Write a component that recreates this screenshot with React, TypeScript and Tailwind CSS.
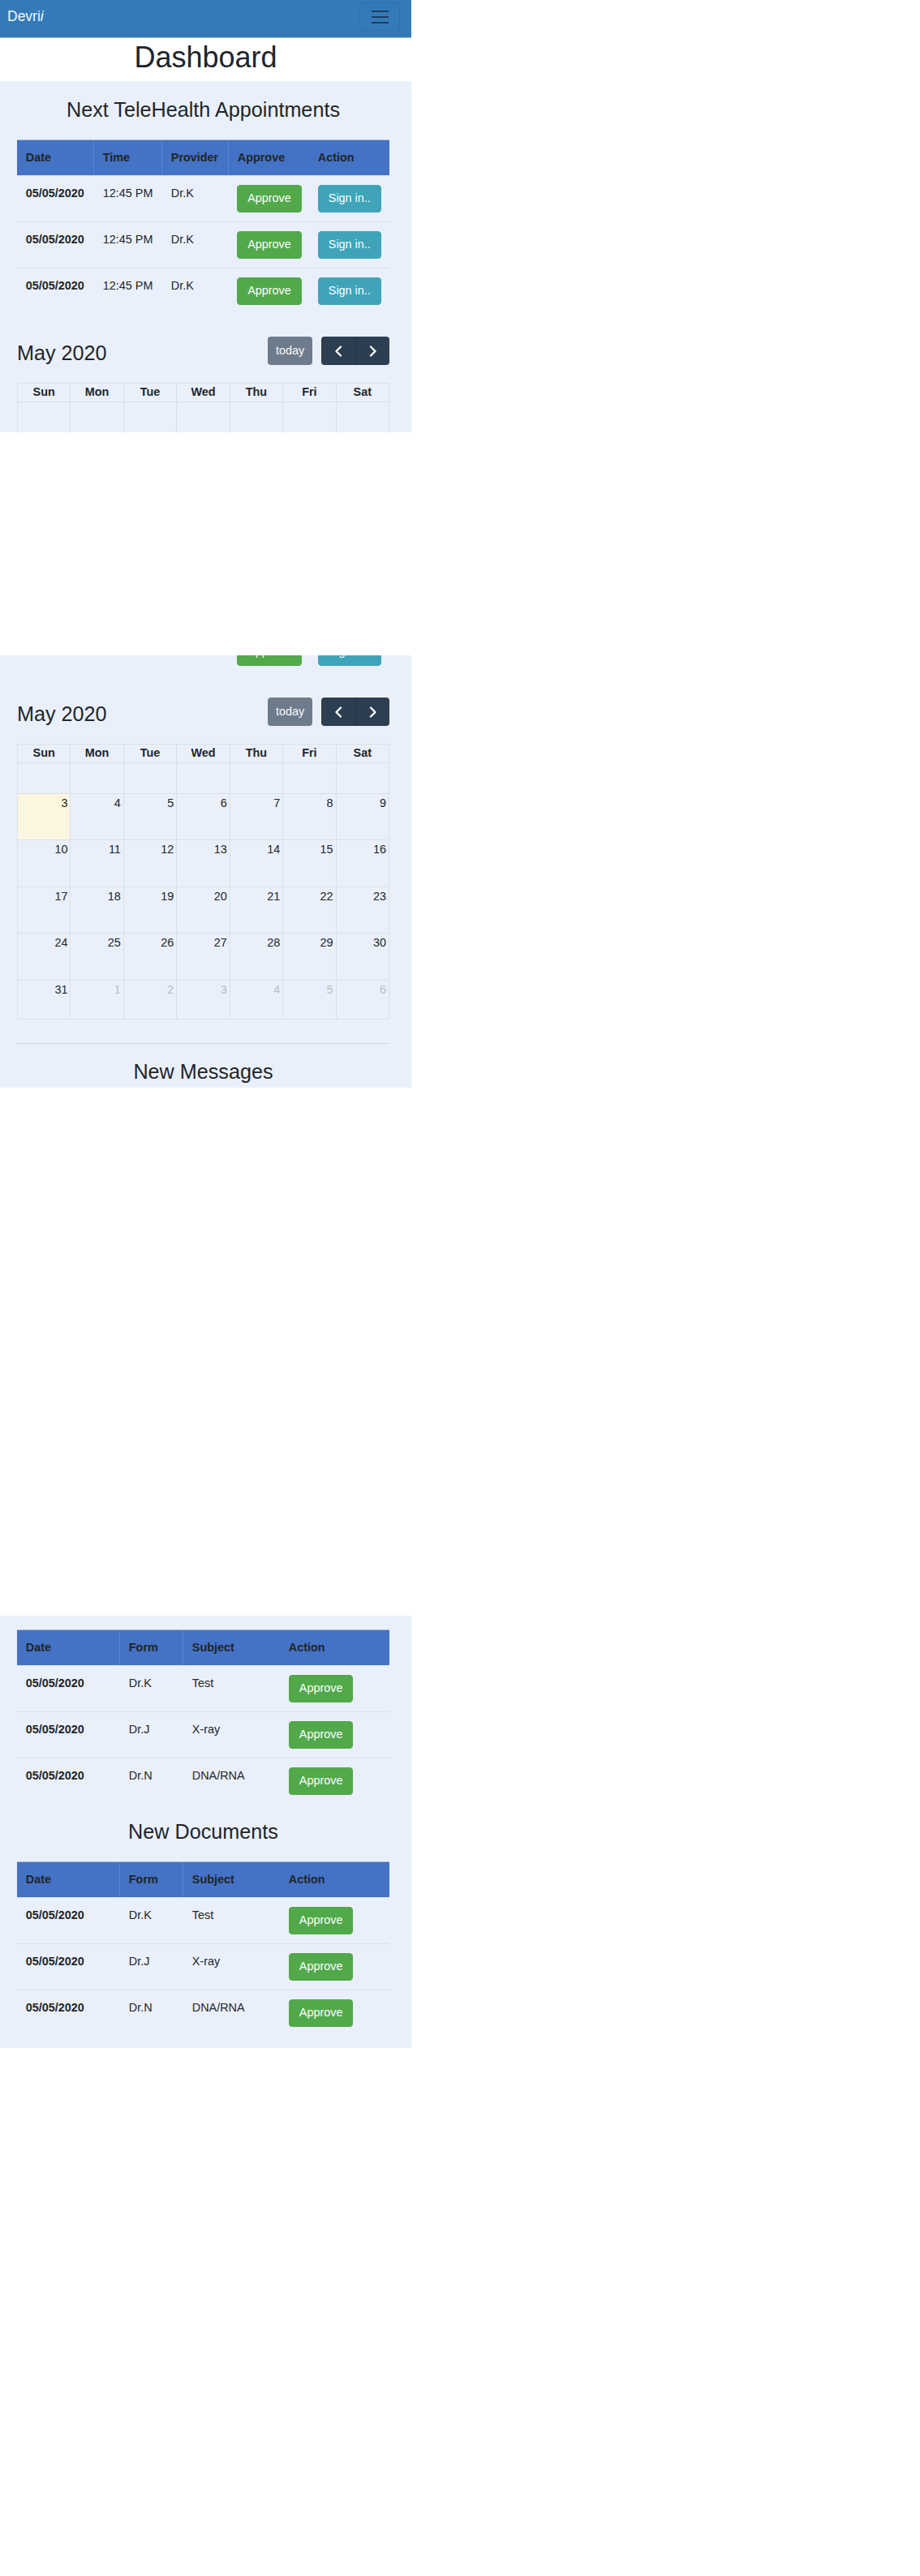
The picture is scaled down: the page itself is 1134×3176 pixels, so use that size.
import React from "react";

const apptRows = [0, 1, 2];
const msgRows = [
  { form: "Dr.K", subject: "Test" },
  { form: "Dr.J", subject: "X-ray" },
  { form: "Dr.N", subject: "DNA/RNA" },
];

type Day = { n: number | null; muted?: boolean; today?: boolean };
const weeks: { h: string; days: Day[] }[] = [
  { h: "h-[39px]", days: Array.from({ length: 7 }, () => ({ n: null })) },
  { h: "h-[57px]", days: [3, 4, 5, 6, 7, 8, 9].map((n) => ({ n, today: n === 3 })) },
  { h: "h-[58px]", days: [10, 11, 12, 13, 14, 15, 16].map((n) => ({ n })) },
  { h: "h-[57px]", days: [17, 18, 19, 20, 21, 22, 23].map((n) => ({ n })) },
  { h: "h-[58px]", days: [24, 25, 26, 27, 28, 29, 30].map((n) => ({ n })) },
  {
    h: "h-[48px]",
    days: [{ n: 31 }, ...[1, 2, 3, 4, 5, 6].map((n) => ({ n, muted: true }))],
  },
];

function GreenBtn() {
  return (
    <span className="inline-block rounded-[4px] border border-[#51a94a] bg-[#51a94a] px-[12px] py-[5.4px] text-[14.4px] leading-[21.6px] text-white">
      Approve
    </span>
  );
}

function TealBtn() {
  return (
    <span className="inline-block rounded-[4px] border border-[#40a4b9] bg-[#40a4b9] px-[12px] py-[5.4px] text-[14.4px] leading-[21.6px] text-white">
      Sign in..
    </span>
  );
}

function HeaderCell({ children, sep }: { children: React.ReactNode; sep?: boolean }) {
  return (
    <div
      className={
        "flex items-center pl-[10.8px] font-bold " + (sep ? "border-r border-[#5b86cf]" : "")
      }
    >
      {children}
    </div>
  );
}

function ApptTable() {
  return (
    <div className="mt-[22px] w-[459px] text-[14.4px] leading-[21.6px]">
      <div className="grid h-[44px] grid-cols-[95px_84px_82px_99px_99px] border-t border-[#a3b8df] bg-[#4472c4]">
        <HeaderCell sep>Date</HeaderCell>
        <HeaderCell sep>Time</HeaderCell>
        <HeaderCell sep>Provider</HeaderCell>
        <HeaderCell>Approve</HeaderCell>
        <HeaderCell>Action</HeaderCell>
      </div>
      {apptRows.map((i) => (
        <div
          key={i}
          className="grid h-[57px] grid-cols-[95px_84px_82px_99px_99px] border-t border-[#d9dfe9] pt-[11px]"
        >
          <div className="pl-[10.8px] font-bold">05/05/2020</div>
          <div className="pl-[10.8px]">12:45 PM</div>
          <div className="pl-[10.8px]">Dr.K</div>
          <div className="pl-[10.2px]">
            <GreenBtn />
          </div>
          <div className="pl-[10.8px]">
            <TealBtn />
          </div>
        </div>
      ))}
    </div>
  );
}

function MsgTable() {
  return (
    <div className="mt-[22px] w-[459px] text-[14.4px] leading-[21.6px]">
      <div className="grid h-[44px] grid-cols-[127px_78px_119px_135px] border-t border-[#a3b8df] bg-[#4472c4]">
        <HeaderCell sep>Date</HeaderCell>
        <HeaderCell sep>Form</HeaderCell>
        <HeaderCell>Subject</HeaderCell>
        <HeaderCell>Action</HeaderCell>
      </div>
      {msgRows.map((r, i) => (
        <div
          key={i}
          className="grid h-[57px] grid-cols-[127px_78px_119px_135px] border-t border-[#d9dfe9] pt-[11px]"
        >
          <div className="pl-[10.8px] font-bold">05/05/2020</div>
          <div className="pl-[10.8px]">{r.form}</div>
          <div className="pl-[10.8px]">{r.subject}</div>
          <div className="pl-[10.8px]">
            <GreenBtn />
          </div>
        </div>
      ))}
    </div>
  );
}

function Chevron({ dir }: { dir: "left" | "right" }) {
  return (
    <svg width="10" height="14" viewBox="0 0 10 14" fill="none">
      <polyline
        points={dir === "left" ? "8,1.5 2.5,7 8,12.5" : "2,1.5 7.5,7 2,12.5"}
        stroke="#ffffff"
        strokeWidth="2.3"
        strokeLinecap="round"
        strokeLinejoin="round"
      />
    </svg>
  );
}

function Calendar() {
  return (
    <>
      <div className="mt-[28px] flex h-[35px] w-[459px] items-start justify-between">
        <div className="mt-[5px] text-[25.2px] leading-[30px]">May 2020</div>
        <div className="flex h-[35px] items-center gap-[11px]">
          <span className="flex h-[35px] w-[55px] items-center justify-center rounded-[4px] bg-[#2c3e50] text-[14.4px] text-white opacity-65">
            today
          </span>
          <div className="flex h-[35px] w-[84px] overflow-hidden rounded-[4px] bg-[#2c3e50]">
            <span className="flex w-[43px] items-center justify-center border-r border-[#263646]">
              <Chevron dir="left" />
            </span>
            <span className="flex flex-1 items-center justify-center">
              <Chevron dir="right" />
            </span>
          </div>
        </div>
      </div>
      <div className="mt-[22px] w-[459px] border-l border-t border-[#dcdfe4] text-[14.4px] leading-[21.6px]">
        <div className="grid h-[22px] grid-cols-7">
          {["Sun", "Mon", "Tue", "Wed", "Thu", "Fri", "Sat"].map((d) => (
            <div key={d} className="border-b border-r border-[#dcdfe4] text-center font-bold">
              {d}
            </div>
          ))}
        </div>
        {weeks.map((w, wi) => (
          <div key={wi} className={"grid grid-cols-7 " + w.h}>
            {w.days.map((d, di) => (
              <div
                key={di}
                className={
                  "border-b border-r border-[#dcdfe4] pr-[3px] pt-[1px] text-right " +
                  (d.today ? "bg-[#fcf6e1] " : "") +
                  (d.muted ? "text-[#b7bcc4]" : "text-[#212529]")
                }
              >
                {d.n ?? ""}
              </div>
            ))}
          </div>
        ))}
      </div>
    </>
  );
}

function Page() {
  return (
    <div className="w-[507px] text-[#212529]">
      <nav className="flex h-[47px] items-start justify-between border-b border-[#a7c3de] bg-[#337ab7] pl-[9px] pr-[14px]">
        <span className="mt-[8px] text-[17.5px] leading-[24px] text-[#f4f7fb]">
          Devri<i>i</i>
        </span>
        <span className="mt-[3px] flex h-[35px] w-[50px] flex-col items-center justify-center gap-[5px] rounded-[4px] border border-[#2f70aa]">
          <span className="h-[2px] w-[21px] bg-[#1f3d60]" />
          <span className="h-[2px] w-[21px] bg-[#1f3d60]" />
          <span className="h-[2px] w-[21px] bg-[#1f3d60]" />
        </span>
      </nav>
      <div className="h-[53px] bg-white pt-[2px] text-center text-[36px] leading-[43px]">
        Dashboard
      </div>
      <section className="bg-[#eaf0fb] pb-[60px] pl-[21px] pr-[27px] pt-[20px]">
        <h2 className="text-center text-[25.2px] leading-[30px]">Next TeleHealth Appointments</h2>
        <ApptTable />
        <Calendar />
        <hr className="mt-[29px] border-t border-[#d3d8e2]" />
        <h2 className="mt-[19px] text-center text-[25.2px] leading-[30px]">New Messages</h2>
        <MsgTable />
        <h2 className="mt-[19px] text-center text-[25.2px] leading-[30px]">New Documents</h2>
        <MsgTable />
      </section>
    </div>
  );
}

export default function App() {
  return (
    <div className="bg-white font-['Liberation_Sans',Arial,sans-serif]">
      <div className="h-[533px] overflow-hidden">
        <Page />
      </div>
      <div className="h-[275px]" />
      <div className="h-[533px] overflow-hidden">
        <div className="mt-[-363px]">
          <Page />
        </div>
      </div>
      <div className="h-[651px]" />
      <div className="h-[533px] overflow-hidden">
        <div className="mt-[-896px]">
          <Page />
        </div>
      </div>
    </div>
  );
}
